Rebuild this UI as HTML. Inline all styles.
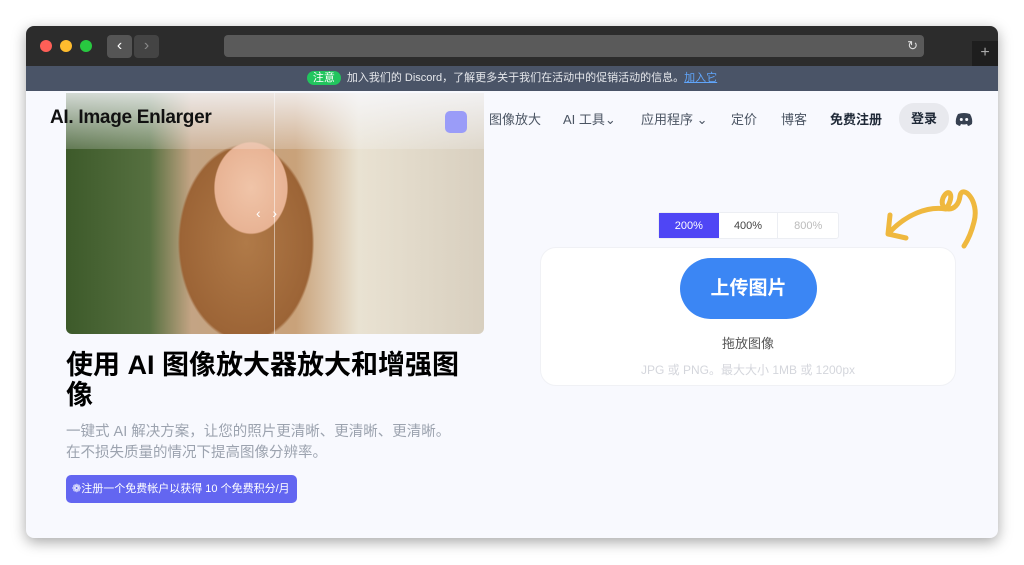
<!DOCTYPE html>
<html><head><meta charset="utf-8"><style>
*{margin:0;padding:0;box-sizing:border-box}
body{width:1024px;height:565px;background:#fff;font-family:"Liberation Sans","Noto Sans CJK SC",sans-serif;position:relative;overflow:hidden}
.win{position:absolute;left:26px;top:26px;width:972px;height:512px;border-radius:8px;overflow:hidden;background:#f8f9fe;box-shadow:0 4px 14px rgba(0,0,0,.35)}
.tb{position:absolute;left:0;top:0;width:972px;height:40px;background:#2c2c2c}
.dot{position:absolute;top:14px;width:12px;height:12px;border-radius:50%}
.banner{position:absolute;left:0;top:40px;width:972px;height:25px;background:#4a5467;color:#e6e8ec;font-size:11px;text-align:center;line-height:25px}
.photo{position:absolute;left:40px;top:67px;width:418px;height:241px;border-radius:0 0 6px 6px;overflow:hidden;
background:radial-gradient(ellipse 60px 75px at 185px 95px,#f0c4a8 0,#e8b394 60%,transparent 62%),
radial-gradient(ellipse 110px 160px at 180px 150px,#b07a48 0,#9c6436 60%,transparent 62%),
linear-gradient(90deg,#3d5a2a 0,#567040 20%,#c4a484 30%,#c9a27a 55%,#e9e2d2 70%,#d8cfbf 100%)}
.navt{position:absolute;font-size:13px;color:#4b5563}
</style></head><body>
<div class="win">
<div class="tb">
<div class="dot" style="left:14px;background:#fe5f57"></div>
<div class="dot" style="left:34px;background:#febc2e"></div>
<div class="dot" style="left:54px;background:#28c840"></div>
<div style="position:absolute;left:81px;top:9px;width:25px;height:23px;background:#555;border-radius:4px;color:#fff;font-size:16px;text-align:center;line-height:22px">‹</div>
<div style="position:absolute;left:108px;top:9px;width:25px;height:23px;background:#444;border-radius:4px;color:#888;font-size:16px;text-align:center;line-height:22px">›</div>
<div style="position:absolute;left:198px;top:9px;width:700px;height:22px;background:#5a5a5a;border-radius:4px;color:#ddd;font-size:13px;text-align:right;padding-right:6px;line-height:22px">↻</div>
<div style="position:absolute;left:946px;top:15px;width:26px;height:25px;background:#1e1e1e;color:#aaa;font-size:16px;text-align:center;line-height:24px">+</div>
</div>
<div class="banner"><span style="background:#22c55e;color:#fff;border-radius:9px;padding:1px 6px;margin-right:6px">注意</span>加入我们的 Discord，了解更多关于我们在活动中的促销活动的信息。<u style="color:#60a5fa">加入它</u></div>
<div class="photo"><div style="position:absolute;left:208px;top:0;width:1px;height:241px;background:rgba(255,255,255,.5)"></div>
<div style="position:absolute;left:190px;top:112px;color:#fff;font-size:14px">‹ &nbsp; ›</div>
<div style="position:absolute;left:0;top:0;width:418px;height:56px;background:linear-gradient(rgba(248,249,254,.8),rgba(248,249,254,.2))"></div></div>
<div style="position:absolute;left:24px;top:81px;font-size:19px;font-weight:bold;color:#111;letter-spacing:-0.3px">AI. Image Enlarger</div>
<div style="position:absolute;left:419px;top:85px;width:22px;height:22px;border-radius:5px;background:#9a9cf8"></div>
<div class="navt" style="left:463px;top:83px">图像放大</div>
<div class="navt" style="left:537px;top:83px">AI 工具⌄</div>
<div class="navt" style="left:615px;top:83px">应用程序 ⌄</div>
<div class="navt" style="left:705px;top:83px">定价</div>
<div class="navt" style="left:755px;top:83px">博客</div>
<div class="navt" style="left:804px;top:83px;color:#1f2937;font-weight:bold">免费注册</div>
<div style="position:absolute;left:873px;top:77px;width:50px;height:31px;border-radius:15px;background:#e8e9ee;font-size:13px;font-weight:bold;color:#1f2937;text-align:center;line-height:31px">登录</div>
<svg style="position:absolute;left:929px;top:86px" width="18" height="14" viewBox="0 0 18 14"><path d="M3 2 Q9 0 15 2 Q18 7 17 12 Q15 13.5 13 14 L12 12 Q9 13 6 12 L5 14 Q3 13.5 1 12 Q0 7 3 2Z" fill="#374151"/><circle cx="6.3" cy="7.5" r="1.5" fill="#f8f9fe"/><circle cx="11.7" cy="7.5" r="1.5" fill="#f8f9fe"/></svg>
<div style="position:absolute;left:40px;top:324px;font-size:27px;font-weight:bold;color:#000;line-height:30px;width:418px">使用 AI 图像放大器放大和增强图像</div>
<div style="position:absolute;left:40px;top:396px;font-size:14.5px;color:#9ca3af;line-height:21px;width:440px;white-space:nowrap">一键式 AI 解决方案，让您的照片更清晰、更清晰、更清晰。<br>在不损失质量的情况下提高图像分辨率。</div>
<div style="position:absolute;left:40px;top:449px;width:231px;height:28px;border-radius:5px;background:#6366f1;color:#fff;font-size:11px;line-height:28px;padding-left:6px">❁注册一个免费帐户以获得 10 个免费积分/月</div>
<div style="position:absolute;left:632px;top:186px;width:181px;height:27px;border:1px solid #eceef3;background:#fff;border-radius:3px;font-size:11px;display:flex">
<div style="width:60px;background:#4f46f5;color:#fff;text-align:center;line-height:26px">200%</div>
<div style="width:60px;color:#444;text-align:center;line-height:26px;border-right:1px solid #eceef3">400%</div>
<div style="width:60px;color:#bbb;text-align:center;line-height:26px">800%</div></div>
<div style="position:absolute;left:514px;top:221px;width:416px;height:139px;background:#fff;border-radius:16px;border:1px solid #f0f1f5"></div>
<div style="position:absolute;left:654px;top:232px;width:137px;height:61px;border-radius:31px;background:#3b86f4;color:#fff;font-size:19px;font-weight:bold;text-align:center;line-height:61px">上传图片</div>
<div style="position:absolute;left:514px;top:307px;width:416px;text-align:center;font-size:13px;color:#555">拖放图像</div>
<div style="position:absolute;left:514px;top:335px;width:416px;text-align:center;font-size:12px;color:#d4d6dc">JPG 或 PNG。最大大小 1MB 或 1200px</div>
<svg style="position:absolute;left:850px;top:156px" width="110" height="80" viewBox="0 0 110 80"><path d="M12 52 C30 32 52 24 70 27 C80 12 72 5 67 16 C62 30 82 32 84 14 C86 2 104 18 98 40 C95 52 92 58 88 64 M12 52 L14 33 M12 52 L30 56" fill="none" stroke="#efb83e" stroke-width="5" stroke-linecap="round" stroke-linejoin="round"/></svg>
</div>
</body></html>
